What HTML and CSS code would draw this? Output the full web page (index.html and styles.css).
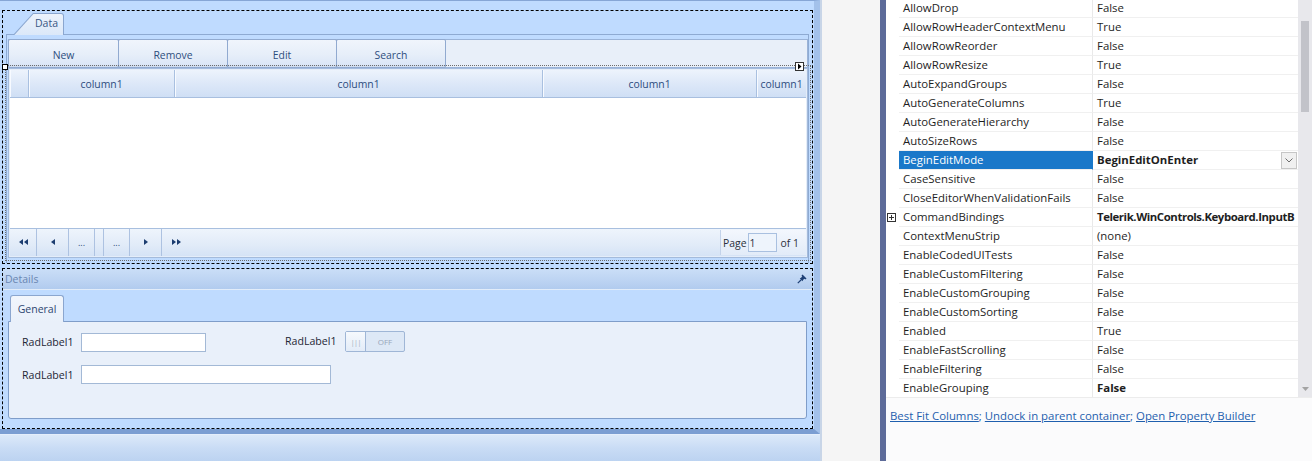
FILE: index.html
```html
<html>
    <head>
        <title>
            Grid Designer
        </title>
        <link rel="stylesheet" href="styles.css">
    </head>
    <body>
        <div class="designer">
            <div class="form">
                <div class="sel sel-top">
                    <div class="tabstrip">
                        <div class="tab-data"><div class="tab-data-in">Data</div></div>
                    </div>
                    <div class="page">
                        <div class="toolbar">
                            <div class="tb-btn">New</div>
                            <div class="tb-btn">Remove</div>
                            <div class="tb-btn">Edit</div>
                            <div class="tb-btn">Search</div>
                        </div>
                        <div class="grid">
                            <span class="handle"></span>
                            <span class="smart-tag"><svg width="7" height="7" viewBox="0 0 7 7"><path d="M2 0.5 L5.5 3.5 L2 6.5 Z" fill="#000"/></svg></span>
                            <div class="grid-head">
                                <div class="hcell rowhdr"></div>
                                <div class="hcell c1">column1</div>
                                <div class="hcell c2">column1</div>
                                <div class="hcell c3">column1</div>
                                <div class="hcell c4">column1</div>
                            </div>
                            <div class="grid-body"></div>
                            <div class="pager">
                                <div class="pbtn w27"><svg width="9" height="6" viewBox="0 0 9 6"><path d="M0 3 L4 0 L4 6 Z M5 3 L9 0 L9 6 Z" fill="#1c3d70"/></svg></div>
                                <div class="pbtn w32"><svg width="4" height="6" viewBox="0 0 4 6"><path d="M0 3 L4 0 L4 6 Z" fill="#1c3d70"/></svg></div>
                                <div class="pbtn w26 dots">...</div>
                                <div class="pgap"></div>
                                <div class="pbtn w26 dots">...</div>
                                <div class="pbtn w32"><svg width="4" height="6" viewBox="0 0 4 6"><path d="M4 3 L0 0 L0 6 Z" fill="#1c3d70"/></svg></div>
                                <div class="pbtn w29 last"><svg width="9" height="6" viewBox="0 0 9 6"><path d="M4 3 L0 0 L0 6 Z M9 3 L5 0 L5 6 Z" fill="#1c3d70"/></svg></div>
                                <div class="pager-fill"></div>
                                <div class="page-box">Page<span class="page-input">1</span>of 1</div>
                            </div>
                        </div>
                    </div>
                </div>
                <div class="sel sel-details">
                    <div class="details-head">
                        <span>Details</span>
                        <svg width="10" height="10" viewBox="0 0 10 10"><path d="M0.8 9.2 L4 6" stroke="#1d3f75" stroke-width="1.2"/><path d="M2.8 4.6 L5.4 7.2 L6.4 5.6 L8.2 4.6 L5.4 1.8 L4.4 3.6 Z" fill="#1d3f75"/><path d="M5 1 L9 5" stroke="#1d3f75" stroke-width="1.5"/></svg>
                    </div>
                    <div class="details-body">
                        <div class="tab-general">General</div>
                        <div class="general-page">
                            <div class="frow r1">
                                <span class="lbl">RadLabel1</span>
                                <span class="tbox w125"></span>
                                <span class="lbl lbl2">RadLabel1</span>
                                <span class="toggle"><span class="thumb">|||</span><span class="off">OFF</span></span>
                            </div>
                            <div class="frow r2">
                                <span class="lbl">RadLabel1</span>
                                <span class="tbox w250"></span>
                            </div>
                        </div>
                    </div>
                </div>
            </div>
            <div class="form-foot"></div>
        </div>
        <div class="gap"></div>
        <div class="props">
            <div class="pg">
                <div class="pg-rows">
                    <div class="prow"><span class="gut"></span><span class="nm">AllowDrop</span><span class="val">False</span></div>
                    <div class="prow"><span class="gut"></span><span class="nm">AllowRowHeaderContextMenu</span><span class="val">True</span></div>
                    <div class="prow"><span class="gut"></span><span class="nm">AllowRowReorder</span><span class="val">False</span></div>
                    <div class="prow"><span class="gut"></span><span class="nm">AllowRowResize</span><span class="val">True</span></div>
                    <div class="prow"><span class="gut"></span><span class="nm">AutoExpandGroups</span><span class="val">False</span></div>
                    <div class="prow"><span class="gut"></span><span class="nm">AutoGenerateColumns</span><span class="val">True</span></div>
                    <div class="prow"><span class="gut"></span><span class="nm">AutoGenerateHierarchy</span><span class="val">False</span></div>
                    <div class="prow"><span class="gut"></span><span class="nm">AutoSizeRows</span><span class="val">False</span></div>
                    <div class="prow selected"><span class="gut"></span><span class="nm">BeginEditMode</span><span class="val bold">BeginEditOnEnter<span class="drop"><svg width="8" height="5" viewBox="0 0 8 5"><path d="M0.5 0.5 L4 4 L7.5 0.5" fill="none" stroke="#6d6d6d"/></svg></span></span></div>
                    <div class="prow"><span class="gut"></span><span class="nm">CaseSensitive</span><span class="val">False</span></div>
                    <div class="prow"><span class="gut"></span><span class="nm">CloseEditorWhenValidationFails</span><span class="val">False</span></div>
                    <div class="prow"><span class="gut"><svg width="9" height="9" viewBox="0 0 9 9"><rect x="0.5" y="0.5" width="8" height="8" fill="#fff" stroke="#333"/><path d="M2 4.5 H7 M4.5 2 V7" stroke="#333"/></svg></span><span class="nm">CommandBindings</span><span class="val bold tight">Telerik.WinControls.Keyboard.InputB</span></div>
                    <div class="prow"><span class="gut"></span><span class="nm">ContextMenuStrip</span><span class="val">(none)</span></div>
                    <div class="prow"><span class="gut"></span><span class="nm">EnableCodedUITests</span><span class="val">False</span></div>
                    <div class="prow"><span class="gut"></span><span class="nm">EnableCustomFiltering</span><span class="val">False</span></div>
                    <div class="prow"><span class="gut"></span><span class="nm">EnableCustomGrouping</span><span class="val">False</span></div>
                    <div class="prow"><span class="gut"></span><span class="nm">EnableCustomSorting</span><span class="val">False</span></div>
                    <div class="prow"><span class="gut"></span><span class="nm">Enabled</span><span class="val">True</span></div>
                    <div class="prow"><span class="gut"></span><span class="nm">EnableFastScrolling</span><span class="val">False</span></div>
                    <div class="prow"><span class="gut"></span><span class="nm">EnableFiltering</span><span class="val">False</span></div>
                    <div class="prow"><span class="gut"></span><span class="nm">EnableGrouping</span><span class="val bold">False</span></div>
                </div>
                <div class="pg-scroll">
                    <div class="thumb-bar"></div>
                    <svg class="down" width="7" height="4" viewBox="0 0 7 4"><path d="M0 0 H7 L3.5 4 Z" fill="#a3a3a3"/></svg>
                </div>
            </div>
            <div class="cmds">
                <a href="#">Best Fit Columns</a>; <a href="#">Undock in parent container</a>; <a href="#">Open Property Builder</a>
            </div>
        </div>
    </body>
</html>
```

FILE: styles.css
```css
body {
    margin: 0;
    display: flex;
    height: 461px;
    overflow: hidden;
    background-color: #f5f5f5;
    font-family: "Open Sans", sans-serif;
}

/* left: form designer surface */
.designer {
    width: 820px;
    flex-shrink: 0;
    display: flex;
    flex-direction: column;
    border-right: 2px solid #c8d5e7;
}
.form {
    height: 434px;
    box-sizing: border-box;
    background-color: #bfdbff;
    border-top: 1px solid #86a6d6;
    border-right: 6px solid #a3c1ea;
    border-bottom: 5px solid #7b9ed2;
    padding: 9px 0 0 2px;
    display: flex;
    flex-direction: column;
    gap: 4px;
}
.form-foot {
    flex: 1;
    background: linear-gradient(#dce9f9, #c9dcf5 50%, #bcd3f1);
    border-top: 1px solid #e4eefb;
}
.sel {
    width: 811px;
    box-sizing: border-box;
    border: 1px dashed #000;
}
.sel-top {
    height: 254px;
    padding: 2px 3px 0 3px;
    display: flex;
    flex-direction: column;
}
.tabstrip {
    padding-left: 7px;
    position: relative;
    z-index: 1;
    height: 21px;
}
.tab-data {
    width: 51px;
    height: 22px;
    box-sizing: border-box;
    padding: 1px 1px 0 1px;
    background-color: #8aa6cf;
    clip-path: polygon(20px 0, 100% 0, 100% 100%, 0 100%);
    border-radius: 0 3px 0 0;
}
.tab-data-in {
    height: 100%;
    background: linear-gradient(#ecf3fc, #dbe8f9);
    clip-path: polygon(19.4px 0, 100% 0, 100% 100%, 0.4px 100%);
    border-radius: 0 2px 0 0;
    padding-left: 21px;
    font-size: 10.5px;
    line-height: 19px;
    color: #3a5783;
}
.page {
    flex: 1;
    border: 1px solid #8eaad2;
    border-bottom: none;
    padding: 4px 0 0 1px;
}
.toolbar {
    width: 800px;
    height: 29px;
    box-sizing: border-box;
    border: 1px solid #9ab3d8;
    background-color: #e8eff9;
    display: flex;
}
.tb-btn {
    width: 110px;
    box-sizing: border-box;
    margin: -1px 0 -1px -1px;
    border: 1px solid #91aad0;
    border-radius: 2px;
    background: linear-gradient(#f0f5fc, #e6eef9 55%, #d9e5f6);
    box-shadow: inset 0 -2px 0 #d0ddf0;
    text-align: center;
    font-size: 10.4px;
    line-height: 28px;
    padding-top: 1px;
    color: #2e4e7e;
}
.tb-btn:first-child {
    margin-left: -1px;
    width: 111px;
}

/* grid */
.grid {
    width: 800px;
    height: 190px;
    box-sizing: border-box;
    border: 1px solid #a4bbdc;
    padding: 1px;
    display: flex;
    flex-direction: column;
    background-color: #e4edf9;
    outline: 1px dotted #6c6c6c;
    outline-offset: 2px;
    position: relative;
}
.handle {
    position: absolute;
    left: -7px;
    top: -5px;
    width: 4px;
    height: 4px;
    background-color: #fff;
    border: 1px solid #000;
}
.smart-tag {
    position: absolute;
    right: 3px;
    top: -7px;
    width: 9px;
    height: 9px;
    box-sizing: border-box;
    border: 1px solid #333;
    background-color: #fff;
    display: flex;
    align-items: center;
    justify-content: center;
}
.grid-head {
    height: 28px;
    box-sizing: border-box;
    display: flex;
    border-bottom: 1px solid #a8bfdf;
    background: linear-gradient(#edf3fc, #dde8f8 50%, #cfdff5);
}
.hcell {
    box-sizing: border-box;
    border-right: 1px solid #a9c0e0;
    box-shadow: inset 1px 0 0 #f7faff;
    text-align: center;
    font-size: 10.4px;
    line-height: 28px;
    color: #2c4c7e;
    white-space: nowrap;
    overflow: hidden;
}
.rowhdr {
    width: 19px;
}
.c1 {
    width: 146px;
}
.c2 {
    width: 368px;
}
.c3 {
    width: 214px;
}
.c4 {
    flex: 1;
    border-right: none;
}
.grid-body {
    flex: 1;
    background-color: #fff;
}
.pager {
    height: 28px;
    box-sizing: border-box;
    display: flex;
    border-top: 1px solid #a8bfdf;
    background: linear-gradient(#eef4fc, #e1ebf8 60%, #d5e3f6);
}
.pbtn {
    box-sizing: border-box;
    border-right: 1px solid #adc2e1;
    display: flex;
    align-items: center;
    justify-content: center;
    padding-bottom: 1px;
}
.w27 {
    width: 27px;
}
.w32 {
    width: 32px;
}
.w26 {
    width: 26px;
}
.w29 {
    width: 29px;
}
.pgap {
    width: 8px;
    border-right: 1px solid #adc2e1;
}
.pbtn.last {
    border-right: none;
}
.dots {
    font-size: 9px;
    line-height: 28px;
    color: #2c4a78;
    padding-top: 2px;
}
.pager-fill {
    flex: 1;
}
.page-box {
    width: 86px;
    box-sizing: border-box;
    margin: 1px 0 1px 0;
    border-left: 1px solid #c3d3ea;
    background: linear-gradient(#f3f7fd, #e2ebf8);
    display: flex;
    align-items: center;
    padding-left: 2px;
    font-size: 10.4px;
    color: #2a2f3a;
}
.page-input {
    width: 29px;
    height: 19px;
    box-sizing: border-box;
    margin: 0 4px 0 1px;
    border: 1px solid #a9c0e0;
    background-color: #eef4fc;
    line-height: 19px;
    padding-left: 1px;
}

/* details dock */
.sel-details {
    flex: 1;
    display: flex;
    flex-direction: column;
}
.details-head {
    height: 21px;
    box-sizing: border-box;
    border-bottom: 1px solid #e2ecf9;
    background: linear-gradient(#cadef7, #bcd3f2 60%, #b1cbee);
    display: flex;
    align-items: center;
    justify-content: space-between;
    padding: 0 5px 0 2px;
    font-size: 10.5px;
    color: #6a86b1;
}
.details-body {
    flex: 1;
    padding: 5px 5px 0 5px;
}
.tab-general {
    width: 54px;
    height: 27px;
    box-sizing: border-box;
    margin-left: 2px;
    margin-bottom: -1px;
    position: relative;
    border: 1px solid #8ba6cf;
    border-bottom: none;
    border-radius: 3px 3px 0 0;
    background: linear-gradient(#f2f6fc, #e9f0fa);
    text-align: center;
    font-size: 10.5px;
    line-height: 26px;
    color: #2d4670;
}
.general-page {
    height: 98px;
    box-sizing: border-box;
    border: 1px solid #7f9dc9;
    border-radius: 0 0 3px 3px;
    background-color: #e9f0fa;
    padding: 9px 0 0 13px;
}
.frow {
    display: flex;
    align-items: center;
}
.r1 {
    height: 22px;
}
.r2 {
    height: 19px;
    margin-top: 12px;
}
.lbl {
    width: 59px;
    font-size: 10.6px;
    color: #1e2635;
    white-space: nowrap;
}
.lbl2 {
    width: 60px;
    margin-left: 79px;
    margin-top: -3px;
}
.tbox {
    height: 19px;
    box-sizing: border-box;
    border: 1px solid #a3b9d6;
    background-color: #fff;
}
.w125 {
    width: 125px;
}
.w250 {
    width: 250px;
}
.toggle {
    width: 60px;
    height: 21px;
    box-sizing: border-box;
    border: 1px solid #9fb6d6;
    border-radius: 2px;
    display: flex;
    background-color: #dde8f6;
    margin-top: -2px;
}
.toggle .thumb {
    width: 19px;
    border-right: 1px solid #9fb6d6;
    background: linear-gradient(#f6f9fd, #e3ecf8);
    font-size: 8px;
    line-height: 19px;
    text-align: center;
    color: #a6b2c2;
    letter-spacing: -1px;
}
.toggle .off {
    flex: 1;
    text-align: center;
    font-size: 8px;
    line-height: 19px;
    color: #98a6ba;
}

/* right: property grid */
.gap {
    flex: 1;
    background-color: #f5f5f5;
}
.props {
    width: 432px;
    flex-shrink: 0;
    box-sizing: border-box;
    border-left: 6px solid #5d6b99;
    background-color: #fbfbfc;
    display: flex;
    flex-direction: column;
}
.pg {
    height: 398px;
    display: flex;
    background-color: #fff;
    border-bottom: 1px solid #ececec;
    box-sizing: border-box;
}
.pg-rows {
    flex: 1;
    overflow: hidden;
}
.prow {
    display: flex;
    height: 19px;
    font-size: 11.4px;
    line-height: 18px;
    color: #1e1e1e;
    white-space: nowrap;
}
.prow:first-child {
    margin-top: -1px;
}
.gut {
    width: 13px;
    display: flex;
    align-items: center;
    padding-left: 1px;
    box-sizing: border-box;
}
.nm {
    width: 194px;
    box-sizing: border-box;
    padding-left: 4px;
    border-bottom: 1px solid #f0f0f0;
    border-right: 1px solid #e9e9e9;
}
.val {
    flex: 1;
    padding-left: 4px;
    border-bottom: 1px solid #f0f0f0;
    overflow: hidden;
    display: flex;
    align-items: center;
}
.bold {
    font-weight: bold;
}
.tight {
    letter-spacing: -0.42px;
}
.selected .nm {
    background-color: #1a78c9;
    color: #fff;
    border-right-color: #1a78c9;
}
.drop {
    margin-left: auto;
    margin-right: 1px;
    width: 16px;
    height: 17px;
    box-sizing: border-box;
    border: 1px solid #c6c6c6;
    background-color: #f0f0f0;
    display: flex;
    align-items: center;
    justify-content: center;
}
.pg-scroll {
    width: 14px;
    background-color: #e8e8ec;
    display: flex;
    flex-direction: column;
    align-items: center;
    justify-content: space-between;
}
.thumb-bar {
    width: 8px;
    height: 91px;
    margin-top: 21px;
    background-color: #c2c3c9;
}
.down {
    margin-bottom: 6px;
}
.cmds {
    padding: 10px 0 0 4px;
    font-size: 11.4px;
    line-height: 16px;
    color: #1f5fae;
}
.cmds a {
    color: #1f5fae;
}
```
